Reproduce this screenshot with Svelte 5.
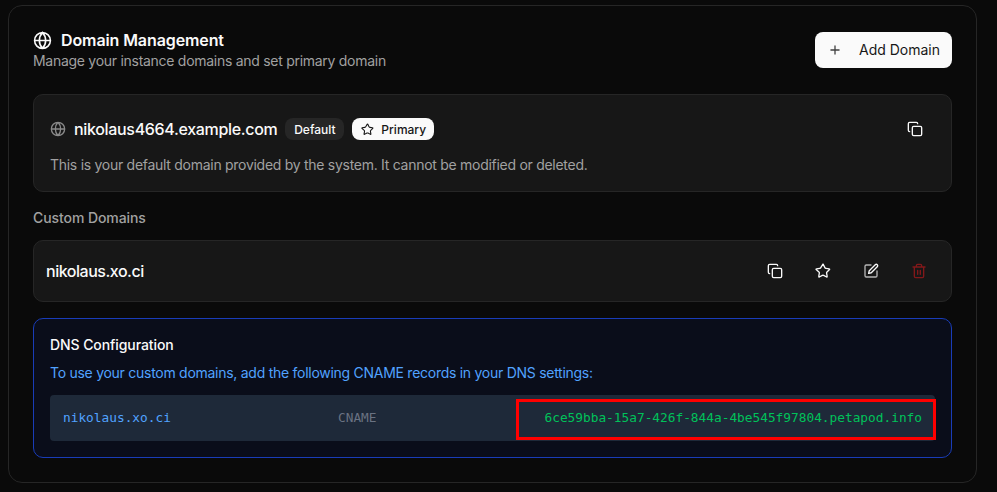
<script lang="ts">
	const globe = 'M12 2a10 10 0 1 0 0 20a10 10 0 1 0 0-20M2 12h20M12 2a14.5 14.5 0 0 0 0 20a14.5 14.5 0 0 0 0-20';
	const star =
		'M11.5 2.3a.5.5 0 0 1 1 0l2.3 4.7a2 2 0 0 0 1.5 1.1l5.2.8a.5.5 0 0 1 .3.9l-3.8 3.7a2 2 0 0 0-.6 1.8l.9 5.2a.5.5 0 0 1-.8.5l-4.6-2.4a2 2 0 0 0-1.9 0l-4.6 2.4a.5.5 0 0 1-.8-.5l.9-5.2a2 2 0 0 0-.6-1.8L1.7 9.8a.5.5 0 0 1 .3-.9l5.2-.8a2 2 0 0 0 1.5-1.1z';
</script>

{#snippet copyIcon()}
	<svg class="icon" viewBox="0 0 24 24">
		<rect x="8" y="8" width="14" height="14" rx="2" />
		<path d="M4 16c-1.1 0-2-.9-2-2V4c0-1.1.9-2 2-2h10c1.1 0 2 .9 2 2" />
	</svg>
{/snippet}

<div class="page">
	<section class="card">
		<header class="head">
			<div>
				<div class="title-row">
					<svg class="globe" viewBox="0 0 24 24"><path d={globe} /></svg>
					<h2>Domain Management</h2>
				</div>
				<p class="sub">Manage your instance domains and set primary domain</p>
			</div>
			<button class="add">
				<svg viewBox="0 0 24 24"><path d="M5 12h14M12 5v14" /></svg>
				<span>Add Domain</span>
			</button>
		</header>

		<div class="box default">
			<div class="row">
				<div class="name-row">
					<svg class="globe small" viewBox="0 0 24 24"><path d={globe} /></svg>
					<span class="domain">nikolaus4664.example.com</span>
					<span class="badge dark">Default</span>
					<span class="badge light">
						<svg viewBox="0 0 24 24"><path d={star} /></svg>
						Primary
					</span>
				</div>
				<div class="copy-single">{@render copyIcon()}</div>
			</div>
			<p class="note">This is your default domain provided by the system. It cannot be modified or deleted.</p>
		</div>

		<div class="label">Custom Domains</div>

		<div class="box custom">
			<span class="domain">nikolaus.xo.ci</span>
			<div class="actions">
				<span class="act">{@render copyIcon()}</span>
				<span class="act">
					<svg class="icon" viewBox="0 0 24 24"><path d={star} /></svg>
				</span>
				<span class="act">
					<svg class="icon" viewBox="0 0 24 24">
						<path class="dim" d="M12 3H5a2 2 0 0 0-2 2v14a2 2 0 0 0 2 2h14a2 2 0 0 0 2-2v-7" />
						<path d="M18.4 2.6a2.1 2.1 0 1 1 3 3L12.4 14.600l-4 1 1-4z" />
					</svg>
				</span>
				<span class="act trash">
					<svg class="icon" viewBox="0 0 24 24">
						<path d="M3 6h18M19 6v14a2 2 0 0 1-2 2H7a2 2 0 0 1-2-2V6M8 6V4a2 2 0 0 1 2-2h4a2 2 0 0 1 2 2v2M10 11v6M14 11v6" />
					</svg>
				</span>
			</div>
		</div>

		<div class="dns">
			<h3>DNS Configuration</h3>
			<p class="hint">To use your custom domains, add the following CNAME records in your DNS settings:</p>
			<div class="record">
				<span class="host">nikolaus.xo.ci</span>
				<span class="type">CNAME</span>
				<span class="target">6ce59bba-15a7-426f-844a-4be545f97804.petapod.info</span>
				<div class="highlight"></div>
			</div>
		</div>
	</section>
</div>

<style>
	:global(body) {
		margin: 0;
		background: #0a0a0a;
		overflow: hidden;
	}
	.page {
		width: 997px;
		height: 492px;
		padding: 5px 20px 9px 8px;
		box-sizing: border-box;
		font-family: Inter, 'Noto Sans', sans-serif;
		color: #fafafa;
	}
	.card {
		height: 100%;
		box-sizing: border-box;
		border: 1px solid #262626;
		border-radius: 14px;
		padding: 26px 24px 0;
		background: #0a0a0a;
	}
	.head {
		display: flex;
		justify-content: space-between;
		align-items: flex-start;
		height: 62px;
	}
	.title-row {
		display: flex;
		align-items: center;
		gap: 9px;
		height: 20px;
		margin-top: -2px;
	}
	svg {
		fill: none;
		stroke: currentColor;
		stroke-width: 2;
		stroke-linecap: round;
		stroke-linejoin: round;
		flex: none;
	}
	.globe {
		width: 19px;
		height: 19px;
		color: #fafafa;
	}
	.globe.small {
		width: 16px;
		height: 16px;
		color: #8a8a8a;
	}
	h2 {
		margin: 0;
		font-size: 16px;
		font-weight: 600;
		line-height: 20px;
		letter-spacing: -0.1px;
	}
	.sub {
		margin: 2px 0 0;
		font-size: 14px;
		line-height: 18px;
		color: #a1a1a1;
		letter-spacing: -0.28px;
	}
	.add {
		display: flex;
		align-items: center;
		gap: 17px;
		height: 36px;
		width: 137px;
		box-sizing: border-box;
		padding: 0 12px 2px 13px;
		border: none;
		border-radius: 8px;
		background: #fafafa;
		color: #171717;
		font: 400 14px Inter, sans-serif;
		white-space: nowrap;
	}
	.add svg {
		width: 14px;
		height: 14px;
		color: #404040;
		stroke-width: 2.200;
		margin-top: 2px;
	}
	.box {
		border: 1px solid #262626;
		border-radius: 10px;
		background: #171717;
	}
	.default {
		height: 98px;
		box-sizing: border-box;
		padding: 20px 16px 0;
	}
	.row {
		display: flex;
		justify-content: space-between;
		align-items: center;
		height: 28px;
	}
	.name-row {
		display: flex;
		align-items: center;
	}
	.domain {
		font-size: 16px;
		font-weight: 500;
		letter-spacing: -0.33px;
		white-space: nowrap;
	}
	.custom .domain {
		letter-spacing: -0.48px;
	}
	.name-row .domain {
		margin-left: 8px;
	}
	.badge {
		display: inline-flex;
		align-items: center;
		height: 22px;
		box-sizing: border-box;
		border-radius: 8px;
		font-size: 12px;
		font-weight: 500;
		white-space: nowrap;
	}
	.dark {
		margin-left: 8px;
		width: 59px;
		justify-content: center;
		background: #262626;
		color: #fafafa;
	}
	.light {
		margin-left: 8px;
		width: 82px;
		padding-left: 9px;
		gap: 7px;
		background: #fafafa;
		color: #171717;
	}
	.light svg {
		width: 13px;
		height: 13px;
	}
	.copy-single {
		display: flex;
		margin-right: 12px;
	}
	.icon {
		width: 16px;
		height: 16px;
		color: #fafafa;
	}
	.dim {
		opacity: 0.7;
	}
	.note {
		margin: 12px 0 0;
		font-size: 14px;
		line-height: 20px;
		color: #a1a1a1;
		letter-spacing: -0.28px;
	}
	.label {
		margin-top: 17px;
		font-size: 14px;
		font-weight: 500;
		line-height: 18px;
		color: #a1a1a1;
		letter-spacing: -0.08px;
	}
	.custom {
		margin-top: 13px;
		height: 62px;
		box-sizing: border-box;
		padding: 0 12px;
		display: flex;
		align-items: center;
		justify-content: space-between;
	}
	.actions {
		display: flex;
		align-items: center;
		gap: 32px;
		margin-right: 12px;
	}
	.act {
		display: flex;
	}
	.trash .icon {
		color: #82181a;
	}
	.dns {
		margin-top: 16px;
		height: 140px;
		box-sizing: border-box;
		border: 1px solid #193cb8;
		border-radius: 10px;
		background: #0a0d1a;
		padding: 16px 16px 0;
	}
	h3 {
		margin: 0;
		font-size: 14px;
		font-weight: 500;
		line-height: 20px;
		letter-spacing: -0.08px;
	}
	.hint {
		margin: 8px 0 0;
		font-size: 14px;
		line-height: 20px;
		color: #51a2ff;
		letter-spacing: -0.27px;
	}
	.record {
		position: relative;
		margin-top: 12px;
		height: 46px;
		box-sizing: border-box;
		padding: 0 13px 1px;
		border-radius: 4px;
		background: #1e2939;
		display: grid;
		grid-template-columns: 275px 1fr auto;
		align-items: center;
		font-family: 'DejaVu Sans Mono', monospace;
		font-size: 12.800px;
	}
	.host {
		color: #51a2ff;
	}
	.type {
		color: #6a7282;
	}
	.target {
		color: #00c25a;
	}
	.highlight {
		position: absolute;
		left: 466px;
		top: 4px;
		width: 420px;
		height: 41px;
		box-sizing: border-box;
		border: 3px solid #f00;
	}
</style>
